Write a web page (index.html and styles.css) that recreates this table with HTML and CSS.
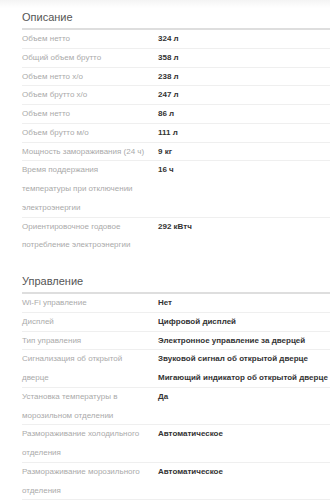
FILE: index.html
```html
<!DOCTYPE html>
<html lang="ru">
<head>
<meta charset="utf-8">
<link rel="stylesheet" href="styles.css">
</head>
<body>
<div class="topband"></div>
<div class="page">
  <section class="section">
    <h2 class="title">Описание</h2>
    <div class="row"><div class="label">Объем нетто</div><div class="value">324 л</div></div>
    <div class="row"><div class="label">Общий объем брутто</div><div class="value">358 л</div></div>
    <div class="row"><div class="label">Объем нетто х/о</div><div class="value">238 л</div></div>
    <div class="row"><div class="label">Объем брутто х/о</div><div class="value">247 л</div></div>
    <div class="row"><div class="label">Объем нетто</div><div class="value">86 л</div></div>
    <div class="row"><div class="label">Объем брутто м/о</div><div class="value">111 л</div></div>
    <div class="row"><div class="label">Мощность замораживания (24 ч)</div><div class="value">9 кг</div></div>
    <div class="row"><div class="label">Время поддержания температуры при отключении электроэнергии</div><div class="value">16 ч</div></div>
    <div class="row last"><div class="label">Ориентировочное годовое потребление электроэнергии</div><div class="value">292 кВтч</div></div>
  </section>
  <section class="section second">
    <h2 class="title">Управление</h2>
    <div class="row"><div class="label">Wi-Fi управление</div><div class="value">Нет</div></div>
    <div class="row"><div class="label">Дисплей</div><div class="value">Цифровой дисплей</div></div>
    <div class="row"><div class="label">Тип управления</div><div class="value">Электронное управление за дверцей</div></div>
    <div class="row"><div class="label">Сигнализация об открытой дверце</div><div class="value"><div>Звуковой сигнал об открытой дверце</div><div>Мигающий индикатор об открытой дверце</div></div></div>
    <div class="row"><div class="label">Установка температуры в морозильном отделении</div><div class="value">Да</div></div>
    <div class="row"><div class="label">Размораживание холодильного отделения</div><div class="value">Автоматическое</div></div>
    <div class="row"><div class="label">Размораживание морозильного отделения</div><div class="value">Автоматическое</div></div>
  </section>
</div>
</body>
</html>
```

FILE: styles.css
```css
html, body {
  margin: 0;
  padding: 0;
  background: #fff;
  overflow: hidden;
}
body {
  font-family: "Liberation Sans", Arial, sans-serif;
  width: 330px;
  height: 500px;
  position: relative;
}
.topband {
  position: absolute;
  top: 0;
  left: 0;
  right: 0;
  height: 8px;
  background: linear-gradient(#f4f4f4, #ffffff);
}
.page {
  position: relative;
  padding-left: 22px;
}
.section.second {
  margin-top: 9px;
}
.title {
  margin: 0;
  padding-top: 6px;
  height: 22px;
  line-height: 22px;
  font-size: 11px;
  font-weight: normal;
  color: #555;
  border-bottom: 2px solid #dedede;
}
.row {
  display: grid;
  grid-template-columns: 136px 1fr;
  font-size: 8px;
  line-height: 18.75px;
  box-shadow: inset 0 -1px 0 #efefef;
}
.row.last {
  box-shadow: none;
}
.label {
  color: #aaa;
  padding-right: 11px;
}
.value {
  color: #333;
  font-weight: bold;
  white-space: nowrap;
}
```
